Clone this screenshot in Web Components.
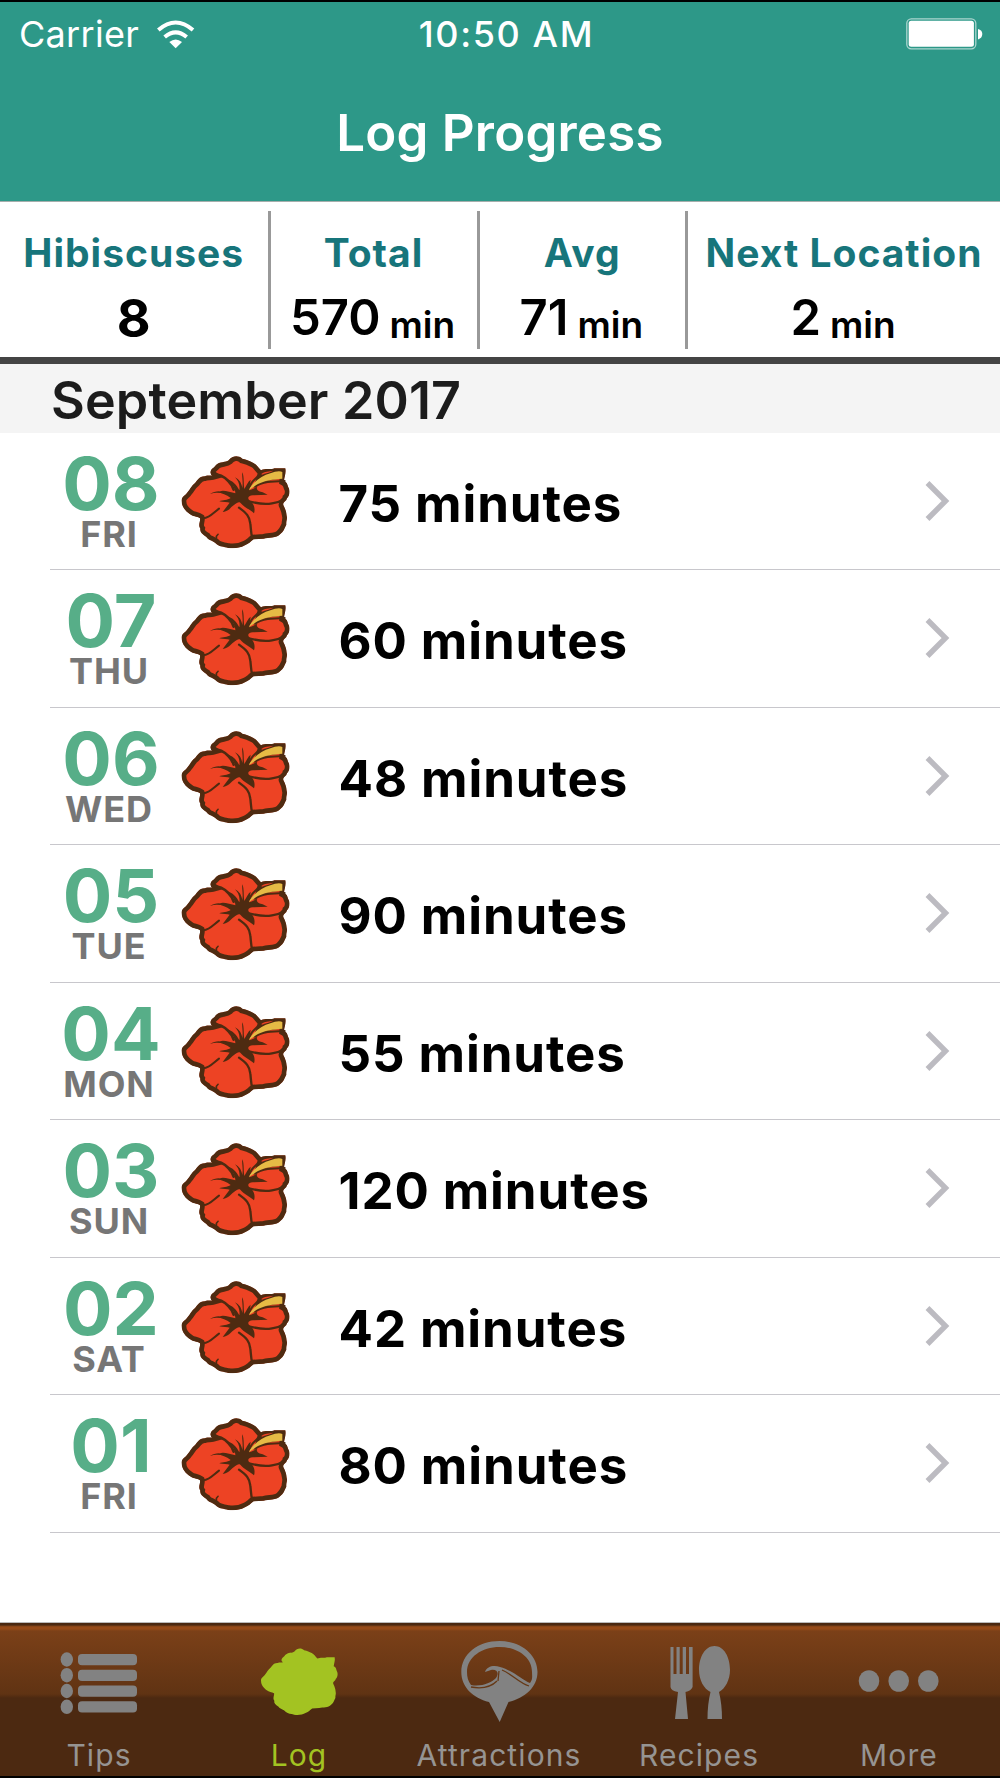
<!DOCTYPE html>
<html lang="en">
<head>
<meta charset="utf-8">
<title>Log Progress</title>
<style>
    body {
        margin: 0;
        font-family: Inter, "Liberation Sans", sans-serif;
        background: #fff;
    }
</style>
</head>
<body>
<log-app></log-app>

<script>
const FLOWER_OUTLINE = 'M121 91C123 82 134 79 136 73C148 60 166 66 175 58C185 44 204 42 216 53C230 56 238 59 248 65C260 71 263 79 272 88C284 81 301 87 312 82L345 82C348 96 342 107 341 120C353 126 351 133 354 139C360 148 358 165 350 172C348 182 337 183 339 192C346 206 348 213 349 224C352 234 347 240 348 251C342 263 339 273 330 279C318 293 296 288 280 293L250 295C240 302 235 309 224 313C208 322 190 323 174 321C160 317 148 318 139 310C128 297 116 300 108 288C94 279 88 273 90 263C82 252 91 241 89 232C79 225 67 227 58 219C47 212 34 198 34 181C32 166 47 163 52 153C60 144 64 133 74 126C82 118 86 105 104 106C113 102 119 105 126 103C122 100 119 96 121 91Z';

class StatusBar extends HTMLElement {
    constructor() {
        super();
        this.attachShadow({ mode: 'open' });
    }

    connectedCallback() {
        this.shadowRoot.innerHTML = `
            <style>
                :host {
                    display: grid;
                    grid-template-columns: 1fr auto 1fr;
                    align-items: center;
                    height: 64px;
                    padding: 0 17px 0 19px;
                    font-size: 36px;
                    color: #fff;
                }
                .left {
                    display: flex;
                    align-items: center;
                    gap: 17px;
                }
                .carrier {
                    font-weight: 400;
                    letter-spacing: 0.3px;
                }
                .time {
                    padding-left: 11px;
                    font-weight: 500;
                    letter-spacing: 1.6px;
                }
                .battery {
                    justify-self: end;
                }
                svg {
                    display: block;
                }
            </style>
            <div class="left">
                <span class="carrier"><slot name="carrier"></slot></span>
                <svg width="39" height="30" viewBox="468 50 117 90" fill="none" stroke="#fff" stroke-width="12">
                    <path d="M475 83Q527 38 579 83"/>
                    <path d="M494 104Q527 76 560 104"/>
                    <path d="M508 119Q527 104 546 119L527 138Z" fill="#fff" stroke="none"/>
                </svg>
            </div>
            <span class="time"><slot></slot></span>
            <svg class="battery" width="77" height="32" viewBox="0 0 77 32">
                <rect x="0.8" y="0.8" width="69" height="30" rx="4.5" fill="none" stroke="#fff" stroke-opacity=".6" stroke-width="1.3"/>
                <rect x="2.7" y="2.7" width="65.2" height="26" rx="2.5" fill="#fff"/>
                <path d="M72 11Q76.3 12 76.3 16T72 21.5Z" fill="#fff"/>
            </svg>
        `;
    }
}

class NavHeader extends HTMLElement {
    constructor() {
        super();
        this.attachShadow({ mode: 'open' });
    }

    connectedCallback() {
        this.shadowRoot.innerHTML = `
            <style>
                :host {
                    display: block;
                    box-sizing: border-box;
                    height: 202px;
                    background: #2d9888;
                    border-top: 2px solid #000;
                    border-bottom: 1px solid #a5aeac;
                }
                h1 {
                    margin: 0;
                    color: #fff;
                    font-size: 51px;
                    font-weight: 600;
                    letter-spacing: 0.2px;
                    line-height: 133px;
                    text-align: center;
                }
            </style>
            <slot name="status"></slot>
            <h1><slot></slot></h1>
        `;
    }
}

class StatItem extends HTMLElement {
    constructor() {
        super();
        this.attachShadow({ mode: 'open' });
    }

    connectedCallback() {
        const unit = this.getAttribute('unit');
        this.shadowRoot.innerHTML = `
            <style>
                :host {
                    display: block;
                    text-align: center;
                    white-space: nowrap;
                }
                .label {
                    padding-top: 18px;
                    color: #17757b;
                    font-size: 39px;
                    font-weight: 700;
                    letter-spacing: 1px;
                    line-height: 48px;
                }
                .value {
                    display: flex;
                    justify-content: center;
                    align-items: baseline;
                    padding: 11px 2px 0 0;
                    color: #000;
                    font-size: 49px;
                    font-weight: 600;
                    line-height: 60px;
                }
                .value.count {
                    padding: 12px 0 0;
                    font-size: 52px;
                    font-weight: 700;
                }
                /* the unit sits slightly below the number's baseline */
                .unit {
                    position: relative;
                    top: 3px;
                    margin-left: 9px;
                    font-size: 37px;
                    font-weight: 600;
                }
            </style>
            <div class="label">${this.getAttribute('label')}</div>
            <div class="value ${unit ? '' : 'count'}">
                <span>${this.getAttribute('value')}</span>
                ${unit ? `<span class="unit">${unit}</span>` : ''}
            </div>
        `;
    }
}

class StatsBar extends HTMLElement {
    constructor() {
        super();
        this.attachShadow({ mode: 'open' });
    }

    connectedCallback() {
        this.shadowRoot.innerHTML = `
            <style>
                :host {
                    display: grid;
                    grid-template: 138px / 270.5px 209px 208.5px 312px;
                    box-sizing: border-box;
                    height: 162px;
                    padding: 9px 0 8px;
                    background: #fff;
                    border-bottom: 7px solid #444;
                }
                ::slotted(*) {
                    border-right: 3px solid #999;
                }
                ::slotted(:last-child) {
                    border-right: 0;
                }
            </style>
            <slot></slot>
        `;
    }
}

class HibiscusIcon extends HTMLElement {
    constructor() {
        super();
        this.attachShadow({ mode: 'open' });
    }

    connectedCallback() {
        this.shadowRoot.innerHTML = `
            <style>
                :host {
                    display: block;
                    width: 110px;
                    height: 94px;
                }
                svg {
                    display: block;
                }
            </style>
            <svg width="110" height="94" viewBox="32 42 330 282">
                <clipPath id="shape"><path d="${FLOWER_OUTLINE}"/></clipPath>
                <g clip-path="url(#shape)">
                    <path d="${FLOWER_OUTLINE}" fill="#ed4324" stroke="#4e2b11" stroke-width="28"/>
                    <path d="M262 100C275 92 300 83 337 90V114C300 112 270 128 250 140Z" fill="#4e2b11"/>
                    <path d="M273 99C282 91 297 91 309 89C299 95 285 96 275 101Z" fill="#ed4324"/>
                </g>
                <g fill="none" stroke="#4e2b11" stroke-linecap="round" stroke-linejoin="round">
                    <path stroke-width="8" d="M126 99C146 99 164 109 174 120C184 130 188 139 190 146"/>
                    <path stroke-width="6" d="M99 232C119 230 130 214 146 203"/>
                    <path stroke-width="7" d="M206 200C228 216 238 226 240 248C242 262 241 274 246 292"/>
                    <path stroke-width="7" d="M226 178C252 186 279 192 305 187C322 185 330 182 343 174"/>
                    <path stroke-width="6" d="M266 92C268 108 252 113 245 124C239 133 237 142 231 150"/>
                    <path stroke-width="6" d="M254 137C275 122 305 121 343 120"/>
                    <path stroke-width="5" d="M138 292Q137 284 143 280"/>
                </g>
                <path d="M234 148C250 121 273 105 300 97C315 91 328 89 336 93L336 113C307 115 282 119 263 129C251 136 243 144 234 148Z" fill="#e6bb45"/>
                <path d="M216 94C222 108 219 127 222 144C230 131 233 121 241 116L236 148C246 147 253 140 261 137C255 147 268 153 277 154L292 161L248 163C230 165 230 172 243 184C254 193 254 208 251 217C239 205 220 198 210 185C202 181 194 190 186 196C179 201 177 210 157 213L178 185C172 184 158 183 147 181C157 176 171 178 181 171C163 158 144 151 119 159C136 148 152 148 172 158L149 151C158 146 180 153 195 157C196 146 186 126 171 116C185 117 200 132 207 148C210 130 202 117 194 109C208 117 213 125 216 141C219 119 214 106 216 94Z" fill="#4e2b11"/>
            </svg>
        `;
    }
}

class LogEntry extends HTMLElement {
    constructor() {
        super();
        this.attachShadow({ mode: 'open' });
    }

    connectedCallback() {
        this.shadowRoot.innerHTML = `
            <style>
                :host {
                    display: grid;
                    grid-template-columns: 118px 110px 1fr auto;
                    box-sizing: border-box;
                    height: 137.5px;
                    margin-left: 50px;
                    padding-right: 50px;
                    border-bottom: 1px solid #c8c7cc;
                }
                .date {
                    text-align: center;
                    font-weight: 700;
                }
                .day {
                    padding: 13px 0 0 4px;
                    color: #57ae88;
                    font-size: 73.5px;
                    line-height: 76px;
                }
                .weekday {
                    color: #767676;
                    font-size: 36px;
                    letter-spacing: 0.9px;
                    line-height: 24px;
                }
                hibiscus-icon {
                    margin: 22px 0 0 13px;
                }
                .duration {
                    padding: 4px 0 0 60.5px;
                    color: #000;
                    font-size: 51px;
                    font-weight: 700;
                    letter-spacing: 0.9px;
                    line-height: 133px;
                }
                svg {
                    margin-top: 47px;
                }
            </style>
            <div class="date">
                <div class="day">${this.getAttribute('day')}</div>
                <div class="weekday">${this.getAttribute('weekday')}</div>
            </div>
            <hibiscus-icon></hibiscus-icon>
            <div class="duration"><slot></slot></div>
            <svg width="25" height="42" viewBox="0 0 25 42" fill="none" stroke="#bcbbc1" stroke-width="5.4">
                <path d="M2.5 3L20.5 21L2.5 39"/>
            </svg>
        `;
    }
}

class LogSection extends HTMLElement {
    constructor() {
        super();
        this.attachShadow({ mode: 'open' });
    }

    connectedCallback() {
        this.shadowRoot.innerHTML = `
            <style>
                :host {
                    display: block;
                }
                h2 {
                    margin: 0;
                    height: 68.5px;
                    padding-left: 51px;
                    background: #f4f4f4;
                    color: #1c1c1c;
                    font-size: 52px;
                    font-weight: 600;
                    letter-spacing: 0.15px;
                    line-height: 74px;
                }
            </style>
            <h2>${this.getAttribute('heading')}</h2>
            <slot></slot>
        `;
    }
}

const TAB_ICONS = {
    tips: [1659.5, 1675.2, 1691, 1706.8].map(y => `
        <ellipse cx="66.8" cy="${y}" rx="6.2" ry="7.2"/>
        <rect x="78" y="${y - 5.5}" width="59" height="11.3" rx="4"/>`).join(''),
    log: `<path transform="translate(253 1637.4) scale(.2367 .241)" d="${FLOWER_OUTLINE}"/>`,
    attractions: `
        <path fill-rule="evenodd" d="M499.5 1641C520 1641 537.5 1654 537.5 1672C537.5 1687 525 1698 508.5 1702L499.7 1722L489 1702C473 1698 461.3 1687 461.3 1672C461.3 1654 478 1641 499.5 1641ZM499.5 1647C482 1647 467 1657 467 1672C467 1677 468 1681 471 1685C481 1687 491 1683 496 1678C500 1672 496 1669 491 1670L485 1672C487 1666 494 1665 500 1667C514 1671 522 1680 530 1683C533 1679 532 1676 532 1672C532 1657 517 1647 499.5 1647Z"/>
        <path d="M499 1671L498 1681M502 1670C512 1674 519 1683 529 1686M471 1687C482 1689 491 1687 497 1681" fill="none" stroke="#663815" stroke-width="1.3"/>`,
    recipes: `
        <path d="M670.5 1647H673.5V1674H676.5V1647H679.7V1674H682.7V1647H686V1674H689V1647H692.6V1687Q691 1691 685.5 1692L688 1719H675L678 1692Q671 1691 670.5 1687Z"/>
        <path d="M714.5 1646C724 1646 730 1657 730 1670C730 1680 725 1689 719 1692Q722 1704 722 1719H707.5Q707.5 1704 710.5 1692C704 1689 699 1680 699 1670C699 1657 705 1646 714.5 1646Z"/>`,
    more: [869, 898.7, 928.3].map(x => `<ellipse cx="${x}" cy="1681" rx="10.3" ry="10.8"/>`).join('')
};

class TabItem extends HTMLElement {
    constructor() {
        super();
        this.attachShadow({ mode: 'open' });
    }

    connectedCallback() {
        const icon = this.getAttribute('icon');
        const left = Object.keys(TAB_ICONS).indexOf(icon) * 200;
        this.shadowRoot.innerHTML = `
            <style>
                :host {
                    display: block;
                    color: #969492;
                    font-size: 30px;
                    font-weight: 400;
                    line-height: 40px;
                    letter-spacing: 1.1px;
                    text-align: center;
                }
                :host([active]) {
                    color: #a3c322;
                }
                svg {
                    display: block;
                    fill: #828282;
                }
                :host([active]) svg {
                    fill: #a3c322;
                }
                .label {
                    padding-right: 2px;
                }
            </style>
            <svg width="200" height="105" viewBox="${left} 1630 200 105">${TAB_ICONS[icon]}</svg>
            <div class="label"><slot></slot></div>
        `;
    }
}

class TabBar extends HTMLElement {
    constructor() {
        super();
        this.attachShadow({ mode: 'open' });
    }

    connectedCallback() {
        this.shadowRoot.innerHTML = `
            <style>
                :host {
                    display: grid;
                    grid-template-columns: repeat(5, 200px);
                    box-sizing: border-box;
                    height: 156px;
                    padding-top: 7px;
                    border-top: 1px solid #b9b9b9;
                    border-bottom: 2px solid #000;
                    background: linear-gradient(#4a2810 0 2px, #7a4018 3px, #964a18 4px 6px, #7b4018 8px, #603313 71px, #4c2911 75px);
                }
            </style>
            <slot></slot>
        `;
    }
}

class LogApp extends HTMLElement {
    constructor() {
        super();
        this.attachShadow({ mode: 'open' });
    }

    connectedCallback() {
        const entries = [
            ['08', 'FRI', 75],
            ['07', 'THU', 60],
            ['06', 'WED', 48],
            ['05', 'TUE', 90],
            ['04', 'MON', 55],
            ['03', 'SUN', 120],
            ['02', 'SAT', 42],
            ['01', 'FRI', 80]
        ];
        this.shadowRoot.innerHTML = `
            <style>
                :host {
                    display: flex;
                    flex-direction: column;
                    width: 1000px;
                    height: 1778px;
                    overflow: hidden;
                }
                log-section {
                    flex: 1;
                }
            </style>
            <nav-header>
                <status-bar slot="status"><span slot="carrier">Carrier</span>10:50 AM</status-bar>
                Log Progress
            </nav-header>
            <stats-bar>
                <stat-item label="Hibiscuses" value="8"></stat-item>
                <stat-item label="Total" value="570" unit="min"></stat-item>
                <stat-item label="Avg" value="71" unit="min"></stat-item>
                <stat-item label="Next Location" value="2" unit="min"></stat-item>
            </stats-bar>
            <log-section heading="September 2017">
                ${entries.map(([day, weekday, minutes]) => `
                <log-entry day="${day}" weekday="${weekday}">${minutes} minutes</log-entry>`).join('')}
            </log-section>
            <tab-bar>
                <tab-item icon="tips">Tips</tab-item>
                <tab-item icon="log" active>Log</tab-item>
                <tab-item icon="attractions">Attractions</tab-item>
                <tab-item icon="recipes">Recipes</tab-item>
                <tab-item icon="more">More</tab-item>
            </tab-bar>
        `;
    }
}

customElements.define('status-bar', StatusBar);
customElements.define('nav-header', NavHeader);
customElements.define('stat-item', StatItem);
customElements.define('stats-bar', StatsBar);
customElements.define('hibiscus-icon', HibiscusIcon);
customElements.define('log-entry', LogEntry);
customElements.define('log-section', LogSection);
customElements.define('tab-item', TabItem);
customElements.define('tab-bar', TabBar);
customElements.define('log-app', LogApp);
</script>
</body>
</html>
